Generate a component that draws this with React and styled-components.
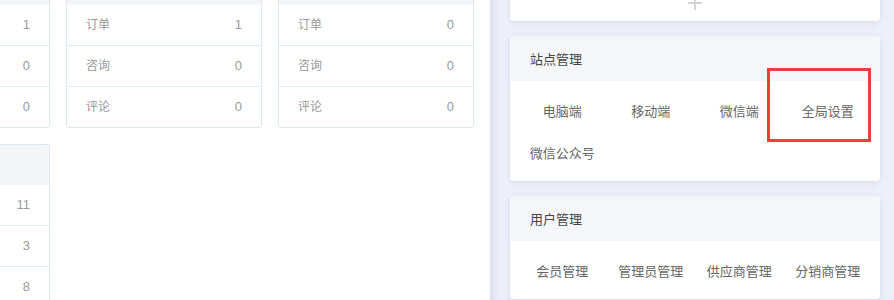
import React from "react";
import styled, { createGlobalStyle } from "styled-components";

const Global = createGlobalStyle`
  html, body { margin: 0; padding: 0; background: #fff; overflow: hidden; }
  body { font-family: "Liberation Sans", "Noto Sans CJK SC", sans-serif; }
  * { box-sizing: border-box; }
`;

const Page = styled.div`
  display: flex;
  align-items: stretch;
  width: 894px;
  height: 336px;
  overflow: hidden;
  margin-top: -36px;
`;

const Main = styled.div`
  width: 490px;
  flex-shrink: 0;
  display: flex;
  align-items: flex-start;
  justify-content: flex-end;
  padding-right: 16px;
  overflow: hidden;
  background: #fff;
`;

const StatGrid = styled.div`
  flex-shrink: 0;
  display: grid;
  grid-template-columns: repeat(3, 196px);
  grid-auto-rows: max-content;
  column-gap: 16px;
  row-gap: 16px;
  align-items: start;
`;

const StatCard = styled.div`
  border: 1px solid #dfe6f2;
  border-radius: 3px;
  background: #fff;
  overflow: hidden;
`;

const StatHead = styled.div`
  height: 40px;
  background: #f4f5f9;
`;

const StatRow = styled.div`
  height: ${(p) => (p.$first ? 40 : 41)}px;
  border-top: ${(p) => (p.$first ? "none" : "1px solid #e3e9f3")};
  display: flex;
  align-items: center;
  justify-content: space-between;
  padding: 0 19px;
  font-size: 12px;
  line-height: 16px;
  color: #999;
`;

const Value = styled.span`
  font-size: 13px;
  color: #9a9a9a;
`;

const Side = styled.div`
  flex: 1;
  background: #eef0f9;
  box-shadow: inset 7px 0 8px -5px rgba(170, 180, 220, 0.45);
  padding: 16px 14px 0 20px;
  display: flex;
  flex-direction: column;
  gap: 15px;
`;

const Panel = styled.div`
  position: relative;
  flex-shrink: 0;
  background: #fff;
  border-radius: 4px;
  box-shadow: 0 1px 6px rgba(190, 198, 228, 0.55);
`;

const AddPanel = styled(Panel)`
  height: 41px;
  display: flex;
  align-items: center;
  justify-content: center;
  padding-top: 4px;
`;

const PanelHead = styled.div`
  height: 45px;
  background: #f4f6fa;
  border-radius: 4px 4px 0 0;
  display: flex;
  align-items: center;
  padding-left: 20px;
  font-size: 13px;
  color: #444;
`;

const PanelBody = styled.div`
  padding: 8px;
  display: grid;
  grid-template-columns: repeat(4, 1fr);
  grid-auto-rows: 42px;
`;

const Item = styled.div`
  display: flex;
  align-items: center;
  justify-content: center;
  font-size: 13px;
  color: #666;
  white-space: nowrap;
`;

const Highlight = styled.div`
  position: absolute;
  left: 257px;
  top: 32px;
  width: 104px;
  height: 74px;
  border: 3px solid #f23b3b;
  pointer-events: none;
`;

const stats = [
  [["订单", 1], ["咨询", 0], ["评论", 0]],
  [["订单", 1], ["咨询", 0], ["评论", 0]],
  [["订单", 0], ["咨询", 0], ["评论", 0]],
  [["商品", 11], ["品牌", 3], ["分类", 8]],
];

function Stat({ rows }) {
  return (
    <StatCard>
      <StatHead />
      {rows.map(([label, value], i) => (
        <StatRow key={label} $first={i === 0}>
          <span>{label}</span>
          <Value>{value}</Value>
        </StatRow>
      ))}
    </StatCard>
  );
}

export default function App() {
  return (
    <>
      <Global />
      <Page>
        <Main>
          <StatGrid>
            {stats.map((rows, i) => (
              <Stat key={i} rows={rows} />
            ))}
          </StatGrid>
        </Main>
        <Side>
          <AddPanel>
            <svg width="16" height="16" viewBox="0 0 16 16">
              <path d="M8 1v14M1 8h14" stroke="#d4d4d4" strokeWidth="2" />
            </svg>
          </AddPanel>
          <Panel>
            <PanelHead>站点管理</PanelHead>
            <PanelBody>
              {["电脑端", "移动端", "微信端", "全局设置", "微信公众号"].map((t) => (
                <Item key={t}>{t}</Item>
              ))}
            </PanelBody>
            <Highlight />
          </Panel>
          <Panel>
            <PanelHead>用户管理</PanelHead>
            <PanelBody>
              {["会员管理", "管理员管理", "供应商管理", "分销商管理"].map((t) => (
                <Item key={t}>{t}</Item>
              ))}
            </PanelBody>
          </Panel>
        </Side>
      </Page>
    </>
  );
}
